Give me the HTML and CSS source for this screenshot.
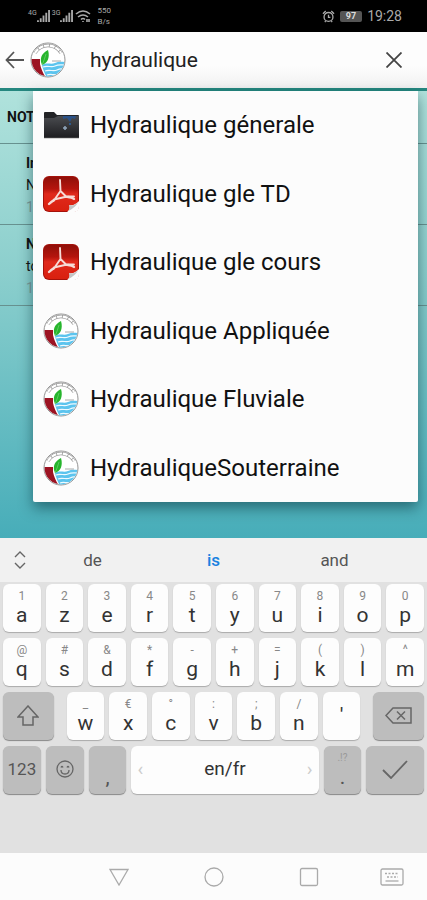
FILE: index.html
```html
<!DOCTYPE html>
<html lang="fr">
<head>
    <meta charset="UTF-8">
    <meta name="viewport" content="width=device-width, initial-scale=1.0">
    <title>Recherche</title>
    <link rel="stylesheet" href="styles.css">
</head>
<body>
    <svg class="sprite" aria-hidden="true">
        <defs>
            <linearGradient id="gRed" x1="0" y1="0" x2="0" y2="1">
                <stop offset="0" stop-color="#8f1009"/>
                <stop offset=".35" stop-color="#b5150d"/>
                <stop offset=".5" stop-color="#e02a1c"/>
                <stop offset="1" stop-color="#d9200f"/>
            </linearGradient>
            <linearGradient id="gDark" x1="0" y1="0" x2="0" y2="1">
                <stop offset="0" stop-color="#4a4c50"/>
                <stop offset="1" stop-color="#1c1c1f"/>
            </linearGradient>
            <clipPath id="disc"><circle cx="18" cy="18" r="16.4"/></clipPath>
        </defs>
        <symbol id="logo" viewBox="0 0 36 36">
            <circle cx="18" cy="18" r="17" fill="#fff" stroke="#888" stroke-width=".9"/>
            <path d="M5 11a15 15 0 0 1 26 0" fill="none" stroke="#999" stroke-width="3.400"/>
            <path d="M5 11a15 15 0 0 1 26 0" fill="none" stroke="#fff" stroke-width="2.200" stroke-dasharray="5 .8"/>
            <g clip-path="url(#disc)">
                <path d="M0 17h10v5c1 5 3 9 6 14H6L0 30z" fill="#9c1322"/>
                <path d="M12 23c5-3 9 0 13-2s6-1 11-1v16H17c-2-4-4-8-5-13z" fill="#5cc4ee"/>
                <path d="M13 25c5-2 8 1 12-1s6-1 10-1M15 29c5-2 8 1 12-1s4-1 6-1M17 33c4-2 7 1 12-1" fill="none" stroke="#eefaff" stroke-width="1.200"/>
            </g>
            <path d="M12 23c-3-7 0-12 6-15 2 7 0 13-6 15z" fill="#27b52d"/>
            <path d="M12 23c2-4 3-8 4-11" fill="none" stroke="#7fd67f" stroke-width=".6"/>
            <path d="M22 19h9" stroke="#aaa" stroke-width="1"/>
        </symbol>
        <symbol id="pdf" viewBox="0 0 36 36">
            <rect width="36" height="36" rx="6" fill="#a5120b"/>
            <rect x="1" y="1" width="34" height="34" rx="5" fill="url(#gRed)"/>
            <path d="M17 4l.5 11-7 10M17.500 15l6 6M11 23.500l13-3h7" fill="none" stroke="#f6dcd7" stroke-width="1.900" stroke-linecap="round" stroke-linejoin="round"/>
            <path d="M11 24q-3 2-5 4M25 21q4 0 6 2" fill="none" stroke="#f6dcd7" stroke-width="2.400" stroke-linecap="round"/>
            <path d="M24 36c3-2 3-5 2-7 4 1 7-1 10-4v5c0 4-2 6-6 6z" fill="#fcfcfc"/>
            <path d="M25 35c2-2 2-4 1-6 4 1 6 0 9-3-1 3-5 7-10 9z" fill="#c4c4c4"/>
        </symbol>
        <symbol id="folder" viewBox="0 0 36 28">
            <path d="M1 2q0-1 1-1h9l3 3h21q1 0 1 1v22H1z" fill="#222326"/>
            <path d="M1 7h10l4-2h21v22H1z" fill="url(#gDark)"/>
            <path d="M20 5h13l-1 3-3-1-2 4-3-4-4 1z" fill="#2a5288"/>
            <circle cx="27" cy="13" r="1" fill="#2a64a8"/>
            <path d="M22 15v4M20 17h4" stroke="#8fa5bb" stroke-width="1.500"/>
            <path d="M1 27h35" stroke="#777" stroke-width=".6"/>
        </symbol>
        <symbol id="signal" viewBox="0 0 14 13">
            <path d="M1 13v-2M4 13V9M7 13V6M10 13V3M13 13V0" stroke="#aaa" stroke-width="2"/>
        </symbol>
    </svg>

    <div class="status">
        <div class="status-left">
            <small>4G</small><svg class="signal"><use href="#signal"/></svg>
            <small>3G</small><svg class="signal"><use href="#signal"/></svg>
            <svg class="wifi" viewBox="0 0 16 14" fill="none" stroke="#aaa" stroke-width="1.600"><path d="M1 5q7-6 14 0M3 8q5-4 10 0M6 10.500q2-2 4 0"/><path d="M8 12v1M12 10v3M14 10v3"/></svg>
            <span class="speed">550<br>B/s</span>
        </div>
        <div class="status-right">
            <svg class="alarm" viewBox="0 0 14 14" fill="none" stroke="#aaa" stroke-width="1.400"><circle cx="7" cy="7.500" r="4.800"/><path d="M7 5v3h2M1 4l3-3M13 4l-3-3M3 13l1-1M11 13l-1-1"/></svg>
            <span class="battery">97</span>
            <span>19:28</span>
        </div>
    </div>

    <form class="search">
        <button type="button" class="back" aria-label="Retour">
            <svg width="20" height="18" viewBox="0 0 20 18" fill="none" stroke="#555" stroke-width="1.800"><path d="M19 9H2M9 1L1.500 9 9 17"/></svg>
        </button>
        <svg class="logo"><use href="#logo"/></svg>
        <input type="text" value="hydraulique" aria-label="Rechercher">
        <button type="button" class="clear" aria-label="Effacer">
            <svg width="16" height="16" viewBox="0 0 16 16" stroke="#444" stroke-width="1.800"><path d="M.5.500l15 15M15.500.500l-15 15"/></svg>
        </button>
    </form>

    <main>
        <h2>NOT</h2>
        <div class="note"><b>In</b><span>N</span><time>1</time></div>
        <div class="note"><b>N</b><span>to</span><time>1</time></div>

        <ul class="menu">
            <li><a href="#"><svg class="folder"><use href="#folder"/></svg>Hydraulique génerale</a></li>
            <li><a href="#"><svg><use href="#pdf"/></svg>Hydraulique gle TD</a></li>
            <li><a href="#"><svg><use href="#pdf"/></svg>Hydraulique gle cours</a></li>
            <li><a href="#"><svg><use href="#logo"/></svg>Hydraulique Appliquée</a></li>
            <li><a href="#"><svg><use href="#logo"/></svg>Hydraulique Fluviale</a></li>
            <li><a href="#"><svg><use href="#logo"/></svg>HydrauliqueSouterraine</a></li>
        </ul>
    </main>

    <div class="words">
        <button class="more" aria-label="Plus"><svg width="12" height="18" viewBox="0 0 12 18" fill="none" stroke="#666" stroke-width="1.400"><path d="M1 6l5-5 5 5M1 12l5 5 5-5"/></svg></button>
        <button>de</button>
        <button class="best">is</button>
        <button>and</button>
        <span class="more"></span>
    </div>

    <div class="keyboard">
        <div class="row">
            <button><small>1</small>a</button>
            <button><small>2</small>z</button>
            <button><small>3</small>e</button>
            <button><small>4</small>r</button>
            <button><small>5</small>t</button>
            <button><small>6</small>y</button>
            <button><small>7</small>u</button>
            <button><small>8</small>i</button>
            <button><small>9</small>o</button>
            <button><small>0</small>p</button>
        </div>
        <div class="row">
            <button><small>@</small>q</button>
            <button><small>#</small>s</button>
            <button><small>&amp;</small>d</button>
            <button><small>*</small>f</button>
            <button><small>-</small>g</button>
            <button><small>+</small>h</button>
            <button><small>=</small>j</button>
            <button><small>(</small>k</button>
            <button><small>)</small>l</button>
            <button><small>^</small>m</button>
        </div>
        <div class="row">
            <button class="dark shift" aria-label="Majuscule"><svg width="22" height="21" viewBox="0 0 22 21" fill="none" stroke="#666" stroke-width="1.500"><path d="M11 1l10 11h-5v8H6v-8H1z"/></svg></button>
            <button><small>_</small>w</button>
            <button><small>€</small>x</button>
            <button><small>°</small>c</button>
            <button><small>:</small>v</button>
            <button><small>;</small>b</button>
            <button><small>/</small>n</button>
            <button>'</button>
            <button class="dark erase" aria-label="Supprimer"><svg width="27" height="17" viewBox="0 0 27 17" fill="none" stroke="#666" stroke-width="1.500"><path d="M8 1h18v15H8L1 8.500zM12 4.500l8 8M20 4.500l-8 8"/></svg></button>
        </div>
        <div class="row">
            <button class="dark num">123</button>
            <button class="dark" aria-label="Emoji"><svg width="18" height="18" viewBox="0 0 18 18" fill="none" stroke="#666" stroke-width="1.300"><circle cx="9" cy="9" r="8"/><path d="M5 10q0 4 4 4t4-4M5 7.500q1-2 2 0M11 7.500q1-2 2 0"/></svg></button>
            <button class="dark low">,</button>
            <button class="space"><i>‹</i>en/fr<i>›</i></button>
            <button class="dark"><small>.!?</small>.</button>
            <button class="dark enter" aria-label="Valider"><svg width="26" height="19" viewBox="0 0 26 19" fill="none" stroke="#666" stroke-width="1.800"><path d="M1 10l8 8L25 1"/></svg></button>
        </div>
    </div>

    <nav>
        <button aria-label="Retour"><svg width="20" height="18" viewBox="0 0 20 18"><path d="M1 1.500h18L10 17z"/></svg></button>
        <button aria-label="Accueil"><svg width="20" height="20" viewBox="0 0 20 20"><circle cx="10" cy="10" r="9"/></svg></button>
        <button aria-label="Applications"><svg width="20" height="20" viewBox="0 0 20 20"><rect x="1.500" y="1.500" width="17" height="17" rx="1.500"/></svg></button>
        <button class="switch" aria-label="Clavier"><svg width="24" height="18" viewBox="0 0 24 18"><rect x="1" y="1" width="22" height="16" rx="1.500"/><path d="M5 5.500h14M7 9h11" stroke-dasharray="2 1.500"/><path d="M5.500 13h13"/></svg></button>
    </nav>
</body>
</html>
```
FILE: styles.css
```css
*{margin: 0;padding: 0;box-sizing: border-box;}
body{
    display: flex;
    flex-direction: column;
    min-height: 100vh;
    font-family: Roboto, "Liberation Sans", sans-serif;
    color: #111;
    background: #fcfcfc;
}
button{
    border: 0;
    background: none;
    font: inherit;
    color: inherit;
}
svg{
    display: block;
    flex: none;
}
ul{list-style: none;}
.sprite{
    position: absolute;
    width: 0;
    height: 0;
}

/* status bar */
.status{
    display: flex;
    justify-content: space-between;
    height: 32px;
    padding: 0 25px 0 28px;
    background: #000;
    color: #aaa;
    font-size: 14px;
}
.status-left, .status-right{
    display: flex;
    align-items: center;
}
.status-left small{
    align-self: flex-start;
    padding-top: 9px;
    font-size: 7px;
}
.signal{
    width: 13px;
    height: 12px;
    margin-right: 2px;
}
.wifi{
    width: 16px;
    height: 14px;
    margin-right: 6px;
}
.speed{
    font-size: 8px;
    line-height: 11px;
}
.status-right{gap: 5px;}
.alarm{
    width: 13px;
    height: 13px;
}
.battery{
    padding: 0 6px;
    border-radius: 2px;
    background: #555;
    color: #ddd;
    font-size: 9px;
    font-weight: bold;
    line-height: 11px;
}

/* search field */
.search{
    display: flex;
    align-items: center;
    height: 59px;
    padding: 0 25px 0 5px;
    background: linear-gradient(#fdfdfd 60%, #f1f1f1);
    border-bottom: 3px solid #25877f;
}
.logo{
    width: 36px;
    height: 36px;
    margin-left: 5px;
}
.search input{
    flex: 1;
    min-width: 0;
    margin-left: 24px;
    border: 0;
    outline: 0;
    background: none;
    font: 21px Roboto, "Liberation Sans", sans-serif;
    color: #222;
}

/* notes list */
main{
    flex: 1;
    position: relative;
    min-height: 447px;
    background: linear-gradient(#b0e2dc, #8ccfcd 40%, #47adb9);
}
h2{
    padding: 0 7px;
    border-bottom: 1px solid #67918f;
    font-size: 14px;
    line-height: 52px;
}
.note{
    display: flex;
    flex-direction: column;
    padding: 8px 26px 6px;
    border-bottom: 1px solid #67918f;
    font-size: 14px;
    line-height: 22px;
}
.note time{color: #7b9a9a;}
.menu{
    position: absolute;
    top: 0;
    left: 33px;
    right: 9px;
    display: grid;
    grid-auto-rows: 1fr;
    min-height: 411px;
    background: #fcfcfc;
    border-radius: 0 0 2px 2px;
    box-shadow: 0 6px 14px rgba(0,40,50,.5);
}
.menu a{
    display: flex;
    align-items: center;
    gap: 11px;
    height: 100%;
    padding: 0 10px;
    font-size: 24px;
    color: #111;
    text-decoration: none;
}
.menu svg{
    width: 36px;
    height: 36px;
}
.menu .folder{height: 28px;}

/* word suggestions */
.words{
    display: flex;
    height: 44px;
    background: #f1f1f1;
    color: #555;
    font-size: 17px;
}
.words button{flex: 1;}
.words .more{
    display: flex;
    flex: none;
    align-items: center;
    justify-content: center;
    width: 32px;
    padding-left: 8px;
}
.words .best{
    color: #1a82e0;
    font-weight: 500;
}

/* keyboard */
.keyboard{
    display: flex;
    flex-direction: column;
    gap: 6px;
    padding: 2px 3px 59px;
    background: #e1e1e1;
}
.row{
    display: flex;
    gap: 5px;
}
.row button{
    display: flex;
    flex: 38 1 0;
    flex-direction: column;
    align-items: center;
    justify-content: center;
    min-width: 0;
    height: 48px;
    padding-bottom: 2px;
    border-radius: 6px;
    background: #fdfdfd;
    box-shadow: 0 1px 1px #aaa;
    color: #333;
    font-size: 21px;
    line-height: 22px;
}
.row small{
    height: 15px;
    color: #888;
    font-size: 12px;
    line-height: 14px;
}
.row .dark{
    background: #bdbdbd;
    box-shadow: 0 1px 1px #888;
    color: #555;
}
.row .dark small{
    color: #999;
    font-size: 10px;
}
.row .shift{
    flex-grow: 51;
    margin-right: 8px;
}
.row .erase{
    flex-grow: 51;
    margin-left: 8px;
}
.row .num{font-size: 17px;}
.row .low{
    justify-content: flex-end;
    padding-bottom: 6px;
}
.row .space{
    flex-grow: 188;
    flex-direction: row;
    justify-content: space-between;
    font-size: 19px;
}
.space i{
    margin: 0 6px;
    color: #ccc;
    font-style: normal;
}
.row .enter{flex-grow: 58;}

/* system buttons */
nav{
    display: flex;
    align-items: center;
    height: 47px;
    padding: 0 23px 0 109px;
}
nav button{margin-right: 75px;}
nav button:nth-child(3){margin-right: 0;}
nav .switch{
    margin-left: auto;
    margin-right: 0;
}
nav svg{
    fill: none;
    stroke: #aaa;
    stroke-width: 1.3;
}
```
